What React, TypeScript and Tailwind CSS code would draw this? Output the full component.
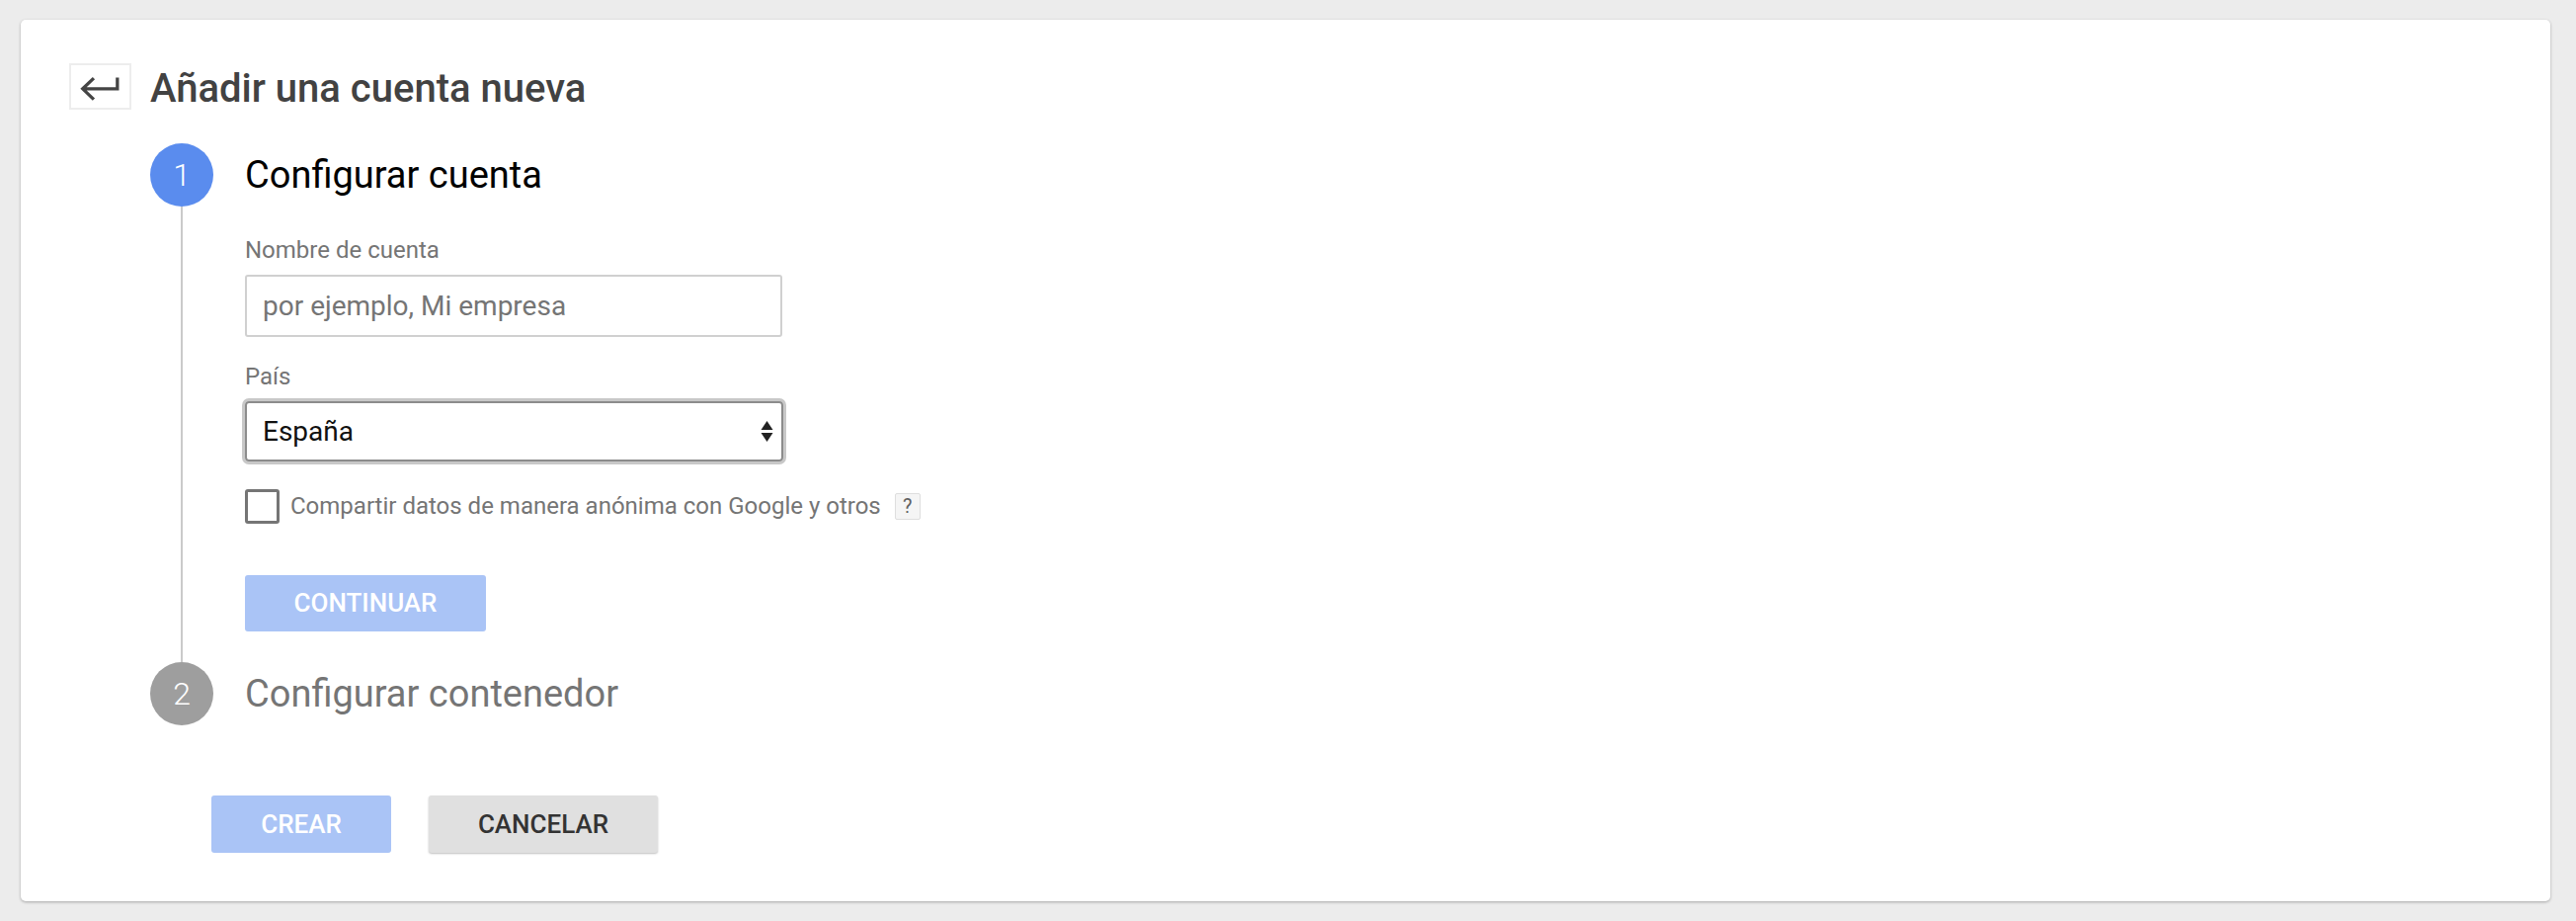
import React from "react";

const BackArrow: React.FC = () => (
  <svg width="63" height="47" viewBox="0 0 63 47" fill="none">
    <path
      d="M24.5 14.5 L12.5 26 L24.5 37.5 M12.5 26 H50 V14"
      stroke="#444"
      strokeWidth="3.5"
      strokeLinejoin="miter"
    />
  </svg>
);

const SelectArrows: React.FC = () => (
  <svg width="13" height="22" viewBox="0 0 13 22">
    <path d="M6.5 0 L12.5 9 H0.5 Z" fill="#222" />
    <path d="M0.5 12 H12.5 L6.5 21 Z" fill="#222" />
  </svg>
);

const StepCircle: React.FC<{ n: number; active?: boolean }> = ({ n, active }) => (
  <div
    className={`flex h-[64px] w-[64px] shrink-0 items-center justify-center rounded-full text-[32px] font-light leading-none text-white ${
      active ? "bg-[#5a8cee]" : "bg-[#9e9e9e]"
    }`}
  >
    {n}
  </div>
);

export default function App() {
  return (
    <div className="min-h-[932px] bg-[#ececec] pl-[21px] pr-[26px] pt-[20px] font-[Roboto,sans-serif]">
      <div className="h-[892px] rounded-[5px] bg-white pl-[49px] pt-[44px] shadow-[0_1px_3px_rgba(0,0,0,0.3)]">
        {/* header */}
        <div className="flex items-center gap-[19px]">
          <button className="flex h-[47px] w-[63px] items-center justify-center border-2 border-[#ededed] bg-white">
            <BackArrow />
          </button>
          <h1 className="mt-[5px] text-[40px] font-medium leading-none text-[#424242]">
            Añadir una cuenta nueva
          </h1>
        </div>

        {/* stepper */}
        <div className="ml-[82px] mt-[34px]">
          <div className="flex gap-[32px]">
            <div className="flex w-[64px] flex-col items-center">
              <StepCircle n={1} active />
              <div className="w-[2px] flex-1 bg-[#cacaca]" />
            </div>
            <div className="flex flex-col pb-[31px]">
              <div className="flex h-[64px] items-center text-[38px] leading-none text-black">
                Configurar cuenta
              </div>

              <label className="mt-[30px] text-[24px] leading-[28px] text-[#757575]">
                Nombre de cuenta
              </label>
              <input
                placeholder="por ejemplo, Mi empresa"
                className="mt-[11px] h-[63px] w-[544px] rounded-[3px] border-2 border-[#d0d0d0] px-[16px] text-[28px] text-black outline-none placeholder:text-[#757575]"
              />

              <label className="mt-[26px] text-[24px] leading-[28px] text-[#757575]">
                País
              </label>
              <div className="mt-[11px] flex h-[61px] w-[545px] items-center justify-between rounded-[4px] border-2 border-[#8c8c8c] pl-[16px] pr-[8px] text-[28px] text-[#111] shadow-[0_0_0_3px_#c8c8c8]">
                <span>España</span>
                <SelectArrows />
              </div>

              <div className="mt-[27px] flex h-[36px] items-center">
                <div className="h-[35px] w-[35px] rounded-[3px] border-[3px] border-[#757575]" />
                <span className="ml-[11px] text-[24px] text-[#757575]">
                  Compartir datos de manera anónima con Google y otros
                </span>
                <span className="ml-[14px] flex h-[27px] w-[26px] items-center justify-center rounded-[2px] border border-[#dedede] bg-[#f5f5f5] text-[20px] text-[#616161]">
                  ?
                </span>
              </div>

              <button className="mt-[52px] h-[57px] w-[244px] rounded-[3px] bg-[#aac4f6] text-[26px] font-medium uppercase text-white">
                Continuar
              </button>
            </div>
          </div>

          <div className="flex items-center gap-[32px]">
            <StepCircle n={2} />
            <div className="text-[38px] leading-none text-[#757575]">
              Configurar contenedor
            </div>
          </div>

          <div className="ml-[62px] mt-[71px] flex gap-[38px]">
            <button className="h-[58px] w-[182px] rounded-[3px] bg-[#aac4f6] text-[26px] font-medium uppercase text-white">
              Crear
            </button>
            <button className="h-[58px] w-[232px] rounded-[3px] bg-[#e0e0e0] text-[26px] font-medium uppercase text-[#333] shadow-[0_1px_2px_rgba(0,0,0,0.25)]">
              Cancelar
            </button>
          </div>
        </div>
      </div>
    </div>
  );
}
